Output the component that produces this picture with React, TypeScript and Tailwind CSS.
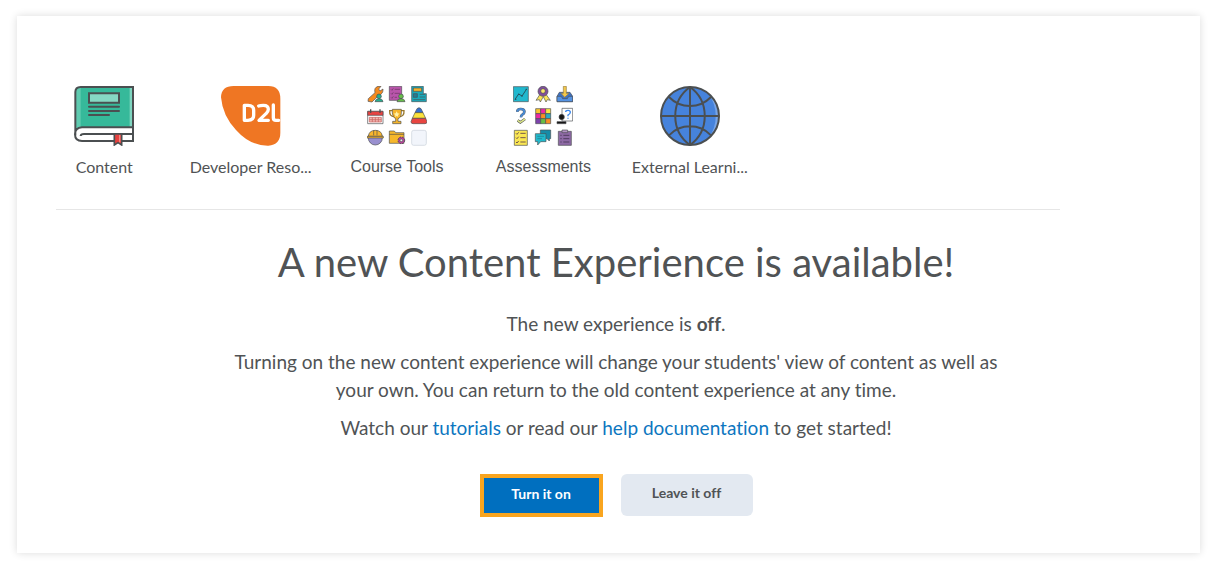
import React from "react";

const DARK = "#4b4f51";

function BookIcon() {
  return (
    <svg viewBox="0 0 180 180" className="size-15" aria-hidden="true">
      <path d="M3 160V18Q3 3 18 3H177V124H20Q3 126 3 145Z" fill="#36b99a" />
      <path d="M4 22Q6 6 20 6V124Q8 126 4 134Z" fill="#5fcbb0" />
      <path d="M167 5h8v118h-8z" fill="#7fd5c0" />
      <path d="M177 124H24Q3 125 3 145T24 165H177Z" fill="#fff" />
      <path d="M4 148V18Q4 3 20 3H177V165H24Q3 165 3 145T24 124H177M177 144H30Q20 144 20 150" fill="none" stroke={DARK} strokeWidth="6" />
      <path d="M45 22H135V50H45Z" fill="#86d8c4" stroke={DARK} strokeWidth="6" />
      <path d="M45 62H135M45 75H135M45 87H105" stroke={DARK} strokeWidth="6" strokeLinecap="round" />
      <path d="M121 144H143V177L132 170L121 177Z" fill="#e8413f" stroke={DARK} strokeWidth="5" />
      <path d="M137 147v22" stroke="#f08a83" strokeWidth="4" />
    </svg>
  );
}

function BrandIcon() {
  return (
    <svg viewBox="0 0 180 180" className="size-15" aria-hidden="true">
      <path d="M38 0H142Q178 0 178 38V140Q178 176 142 179Q88 180 45 132Q5 90 0 34Q1 0 38 0Z" fill="#ef7623" />
      <g fill="none" stroke="#fff" strokeWidth="10" strokeLinejoin="round" strokeLinecap="round">
        <path d="M70 58V103H81Q98 103 98 88V73Q98 58 81 58Z" />
        <path d="M113 60Q118 58 127 58Q142 58 142 70Q142 77 135 83L114 103H142" />
        <path d="M157 57V95Q157 103 165 103H173" />
      </g>
    </svg>
  );
}

function GlobeIcon() {
  return (
    <svg viewBox="0 0 180 180" className="size-15" aria-hidden="true">
      <circle cx="90" cy="90" r="87" fill="#4683dc" />
      <path d="M145 23A86 86 0 0 1 145 157A112 112 0 0 0 145 23Z" fill="#78a5e7" />
      <g fill="none" stroke={DARK} strokeWidth="6">
        <circle cx="90" cy="90" r="87" />
        <path d="M90 3V177M3 90H177M90 3C31 45 31 135 90 177M90 3C149 45 149 135 90 177M27 33Q53 60 90 60T153 33M27 148Q53 121 90 121T153 148" />
      </g>
    </svg>
  );
}

function CourseToolsIcon() {
  return (
    <svg viewBox="0 0 180 180" className="size-15" stroke={DARK} strokeWidth="2" aria-hidden="true">
      {/* wrench and person */}
      <path d="M4 38L24 20Q20 5 33 1L42 1L35 9L39 15L48 9Q49 24 35 28L15 48L3 46Z" fill="#f58a1f" />
      <circle cx="36" cy="31" r="7" fill="#27ae8f" />
      <path d="M24 47Q25 38 36 38T48 47Z" fill="#27ae8f" />
      {/* checklist and person */}
      <path d="M67 1H104V43H67Z" fill="#b955ab" />
      <path d="M72 10l3 3 4-6M83 10H99M72 22l3 3 4-6M83 22H99M72 34l3 3 4-6M83 34H90" fill="none" stroke="#67345f" />
      <circle cx="102" cy="31" r="7" fill="#67bd4c" />
      <path d="M90 47Q91 38 102 38T114 47Z" fill="#67bd4c" />
      {/* newsletter */}
      <path d="M134 1H169V23H178V47H134Z" fill="#19aabb" />
      <path d="M139 6H164V16H139Z" fill="#f3b32b" />
      <path d="M139 23H151V34H139ZM158 25H174M158 33H174M139 41H174" fill="#247d93" />
      {/* calendar */}
      <path d="M2 76H48V113H2Z" fill="#fff" />
      <path d="M2 76H48V88H2Z" fill="#e74342" />
      <path d="M11 70V81M39 70V81" strokeWidth="4" />
      <path d="M7 94H43V108H7ZM7 101H43M16 94V108M25 94V108M34 94V108" fill="#f4b7b2" stroke="#c45d5b" />
      {/* trophy */}
      <path d="M77 74H68Q67 92 82 92M102 74H111Q112 92 97 92" fill="none" stroke="#9a792c" strokeWidth="4" />
      <path d="M76 70H103V81Q102 96 93 98V106H102V113H77V106H86V98Q77 95 76 81Z" fill="#f5b52c" />
      <path d="M89 76l3 6 6 1-5 4 1 6-5-3-5 3 1-6-5-4 6-1Z" fill="#fff2a7" stroke="none" />
      {/* triangle */}
      <path d="M150 68Q156 62 162 68L168 80H144Z" fill="#3570cf" />
      <path d="M144 80H168L176 97H136Z" fill="#fbe23b" />
      <path d="M136 97H176L180 107Q180 113 174 113H138Q132 113 132 107Z" fill="#e84540" />
      {/* helmet */}
      <circle cx="25" cy="156" r="21" fill="#9990cf" />
      <path d="M4 151Q6 133 25 133T46 151Z" fill="#f8b62d" />
      <path d="M0 151H49V156H0ZM20 133V148M30 133V148" fill="#f8b62d" />
      {/* folder and gear */}
      <path d="M67 135H82L86 140H111V172H67Z" fill="#f6b72c" />
      <path d="M67 145H111" />
      <circle cx="103" cy="163" r="10" fill="#b9439b" strokeWidth="3" strokeDasharray="5 3" />
      <circle cx="103" cy="163" r="4" fill="#eee" />
      <rect x="134" y="133" width="44" height="45" rx="6" fill="#f2f5fb" stroke="#c9d0da" />
    </svg>
  );
}

function AssessmentsIcon() {
  return (
    <svg viewBox="0 0 180 180" className="size-15" stroke={DARK} strokeWidth="2" aria-hidden="true">
      {/* chart */}
      <path d="M1 2H46V47H1Z" fill="#20b8ce" />
      <path d="M6 40L17 24L27 30L41 9" fill="none" stroke="#26535f" strokeWidth="3" />
      <path d="M15 23h4v4h-4zM25 28h4v4h-4zM38 8h4v4h-4zM6 38h4v4H6z" fill="#26535f" stroke="none" />
      {/* ribbon */}
      <path d="M81 25L69 43L79 41L82 48L91 32L99 48L103 41L112 43L99 25Z" fill="#fbe45a" />
      <circle cx="90" cy="16" r="15" fill="#81509b" />
      <circle cx="90" cy="15" r="7" fill="#fbe66a" />
      {/* inbox */}
      <path d="M139 19H171L179 31V47H132V31Z" fill="#3d72c5" />
      <path d="M132 31H145L149 38H163L167 31H179V47H132Z" fill="#5593e3" />
      <path d="M151 1H160V22H168L155 34L144 22H151Z" fill="#f4c84b" stroke="#927b45" />
      {/* question mark */}
      <path d="M13 77Q13 69 23 69Q34 69 34 77Q34 83 28 86Q24 88 24 94" fill="none" strokeWidth="8" />
      <path d="M13 77Q13 69 23 69Q34 69 34 77Q34 83 28 86Q24 88 24 94" fill="none" stroke="#4a8bd3" strokeWidth="6" />
      <path d="M14 103L22 109L36 99" fill="none" strokeWidth="8" />
      <path d="M14 103L22 109L36 99" fill="none" stroke="#dce58a" strokeWidth="5" />
      {/* colour grid */}
      <path d="M68 68H83V83H68Z" fill="#f9c52e" />
      <path d="M83 68H98V83H83Z" fill="#ed28a2" />
      <path d="M98 68H113V83H98Z" fill="#fce543" />
      <path d="M68 83H83V98H68Z" fill="#ed28a2" />
      <path d="M83 83H98V98H83Z" fill="#f98f24" />
      <path d="M98 83H113V98H98Z" fill="#2caec1" />
      <path d="M68 98H83V113H68Z" fill="#7d43ac" />
      <path d="M83 98H98V113H83Z" fill="#67bd43" />
      <path d="M98 98H113V113H98Z" fill="#f98f24" />
      {/* person and question */}
      <path d="M147 67H179V105H147Z" fill="#fff" />
      <path d="M158 78Q158 73 165 73T172 79Q172 84 165 87V91M165 95V98" fill="none" stroke="#3685ed" strokeWidth="4" />
      <circle cx="146" cy="93" r="8" fill="#171717" />
      <path d="M132 113V107H159V113Z" fill="#111" />
      {/* checklist */}
      <path d="M4 133H43V178H4Z" fill="#fae752" />
      <path d="M9 142l3 3 5-6M9 155l3 3 5-6M9 168l3 3 5-6M22 142H38M22 155H38M22 168H38" fill="none" strokeWidth="3" stroke="#74584b" />
      {/* discussion */}
      <path d="M82 132H113V158H109V165L102 158H82Z" fill="#168ba7" />
      <path d="M67 143H99V167H83L74 177V167H67Z" fill="#21b9cc" />
      <path d="M73 151H93M73 158H87" stroke="#23798a" />
      {/* clipboard */}
      <path d="M136 136H175V178H136Z" fill="#8e6aa5" />
      <path d="M147 132H164V140H147Z" fill="#b392c4" />
      <path d="M142 148H146M151 148H169M142 158H146M151 158H169M142 168H146M151 168H169" stroke="#513d60" strokeWidth="3" />
    </svg>
  );
}

interface Tool {
  label: string;
  icon: React.ReactNode;
  font: string;
}

const LATO = "font-['Lato',sans-serif]";
const ARIAL = "font-['Liberation_Sans',sans-serif]";

const tools: Tool[] = [
  { label: "Content", icon: <BookIcon />, font: LATO },
  { label: "Developer Reso...", icon: <BrandIcon />, font: LATO },
  { label: "Course Tools", icon: <CourseToolsIcon />, font: ARIAL },
  { label: "Assessments", icon: <AssessmentsIcon />, font: ARIAL },
  { label: "External Learni...", icon: <GlobeIcon />, font: LATO },
];

export default function App() {
  return (
    <div className="bg-white p-4 font-['Lato',sans-serif] text-[#505355] [font-variant-ligatures:none]">
      <main className="mx-px bg-white pt-[70px] pr-6 pb-9 pl-[39px] shadow-[0_0_8px_rgba(0,0,0,0.14)]">
        <nav className="mr-[116px] border-b border-[#e6e6e6] pb-[31px]">
          <div className="-ml-[25px] grid w-[732px] grid-cols-5">
            {tools.map((tool) => (
              <a key={tool.label} href="#" className="flex flex-col items-center">
                {tool.icon}
                <span className={`mt-2.5 whitespace-nowrap text-base leading-[22px] ${tool.font}`}>{tool.label}</span>
              </a>
            ))}
          </div>
        </nav>
        <section className="flex flex-col items-center text-center text-[19px] leading-7">
          <h1 className="mt-7 text-[40px] leading-[48px]">A new Content Experience is available!</h1>
          <p className="mt-6">
            The new experience is <strong>off</strong>.
          </p>
          <p className="mt-2.5 max-w-[800px]">
            Turning on the new content experience will change your students' view of content as well as your own. You can
            return to the old content experience at any time.
          </p>
          <p className="mt-2.5">
            Watch our <a href="#" className="text-[#0d76bf]">tutorials</a> or read our{" "}
            <a href="#" className="text-[#0d76bf]">help documentation</a> to get started!
          </p>
          <div className="mt-8 flex items-start gap-[18px] text-sm font-bold leading-5">
            <button type="button" className="h-[43px] min-w-[123px] border-4 border-[#f9a51f] bg-[#006fbf] px-6 pb-1 text-white">
              Turn it on
            </button>
            <button type="button" className="h-[42px] min-w-[132px] rounded-md bg-[#e3e9f1] px-6 pb-1">
              Leave it off
            </button>
          </div>
        </section>
      </main>
    </div>
  );
}
